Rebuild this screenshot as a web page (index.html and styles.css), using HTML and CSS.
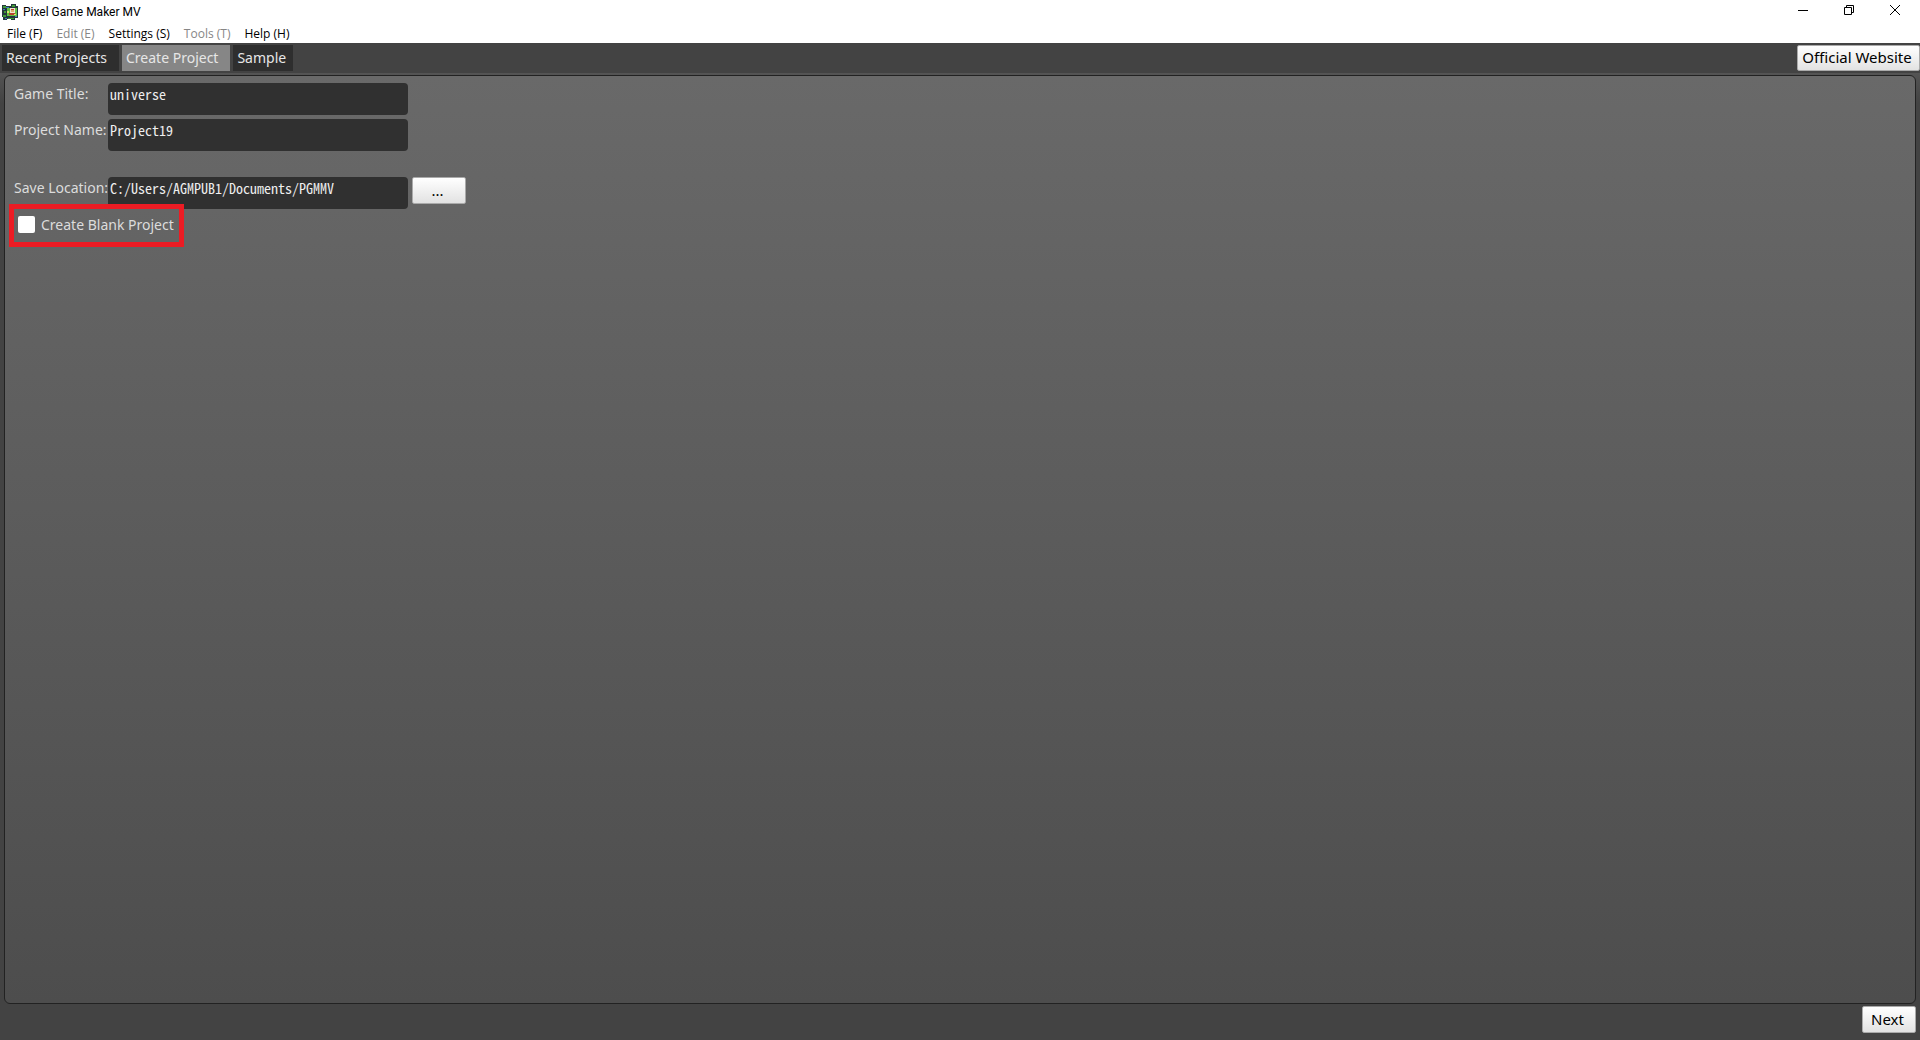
FILE: index.html
```html
<!DOCTYPE html>
<html lang="en">
<head>
    <meta charset="UTF-8">
    <meta name="viewport" content="width=device-width, initial-scale=1.0">
    <title>Pixel Game Maker MV</title>
    <link rel="stylesheet" href="styles.css">
</head>
<body>
    <!-- Title bar -->
    <header class="title-bar">
        <svg class="app-icon" viewBox="0 0 16 16" shape-rendering="crispEdges">
            <path fill="#24383c" d="M0 1h4v1h5V0h5v2h2v12h-3v2H9v-1H5v1H1v-3H0z"/>
            <path fill="#3f9a35" d="M1 2h3v2H1zM10 1h3v2h-3zM2 7h2v2H2zM1 11h3v2H1zM6 14h6v1H6z"/>
            <path fill="#3c7fc0" d="M4 3h3v1H4zM13 12h2v1h-2zM1 5h2v1H1zM3 14h2v1H3z"/>
            <path fill="#62c043" d="M5 4h10v8H5z"/>
            <path fill="#f0e4d0" d="M8 4h5v5H8z"/>
            <path fill="#b8452c" d="M9 5h3v1H9zM7 9h6v2H7z"/>
            <path fill="#e0b070" d="M9 6h3v2H9z"/>
            <path fill="#d9e66a" d="M5 7h2v2H5zM12 10h2v1h-2z"/>
        </svg>
        <span class="app-title">Pixel Game Maker MV</span>
        <div class="window-controls">
            <button type="button" aria-label="Minimize">
                <svg viewBox="0 0 10 10"><path d="M0 5.5h10"/></svg>
            </button>
            <button type="button" aria-label="Restore">
                <svg viewBox="0 0 10 10"><path d="M.5 2.5h7v7h-7zM2.5 2.5v-2h7v7h-2"/></svg>
            </button>
            <button type="button" aria-label="Close">
                <svg viewBox="0 0 10 10"><path d="M0 0l10 10M10 0L0 10"/></svg>
            </button>
        </div>
    </header>

    <!-- Menu bar -->
    <nav class="menu-bar">
        <button type="button">File (F)</button>
        <button type="button" disabled>Edit (E)</button>
        <button type="button">Settings (S)</button>
        <button type="button" disabled>Tools (T)</button>
        <button type="button">Help (H)</button>
    </nav>

    <!-- Tabs -->
    <div class="tab-bar">
        <button type="button" class="tab">Recent Projects</button>
        <button type="button" class="tab selected">Create Project</button>
        <button type="button" class="tab tab-short">Sample</button>
        <button type="button" class="push-button website-button">Official Website</button>
    </div>

    <!-- Create project form -->
    <form class="workspace">
        <div class="panel">
            <div class="field-row">
                <label for="game-title">Game Title:</label>
                <input type="text" id="game-title" value="universe">
            </div>
            <div class="field-row">
                <label for="project-name">Project Name:</label>
                <input type="text" id="project-name" value="Project19">
            </div>
            <div class="field-row location-row">
                <label for="save-location">Save Location:</label>
                <input type="text" id="save-location" value="C:/Users/AGMPUB1/Documents/PGMMV">
                <button type="button" class="push-button browse-button">...</button>
            </div>
            <label class="blank-project">
                <input type="checkbox" id="blank-project">
                Create Blank Project
            </label>
        </div>
        <div class="footer">
            <button type="button" class="push-button next-button">Next</button>
        </div>
    </form>
</body>
</html>
```

FILE: styles.css
```css
* {
    box-sizing: border-box;
}
body {
    margin: 0;
    min-height: 100vh;
    display: flex;
    flex-direction: column;
    background: #444;
    font-family: "Noto Sans", "Open Sans", sans-serif;
    font-size: 14px;
}
button {
    margin: 0;
    padding: 0;
    border: none;
    background: none;
    font: inherit;
    color: inherit;
}

/* Title bar */
.title-bar {
    display: flex;
    align-items: center;
    height: 23px;
    padding: 0 2px;
    background: white;
    font-family: Roboto, sans-serif;
    font-size: 12px;
    color: black;
}
.app-icon {
    width: 16px;
    height: 16px;
    margin-right: 5px;
}
.window-controls {
    display: flex;
    align-self: flex-start;
    margin-left: auto;
}
.window-controls button {
    display: flex;
    align-items: center;
    justify-content: center;
    width: 46px;
    height: 20px;
}
.window-controls svg {
    width: 10px;
    height: 10px;
    fill: none;
    stroke: black;
}

/* Menu bar */
.menu-bar {
    display: flex;
    align-items: center;
    gap: 14px;
    height: 20px;
    padding: 2px 0 0 7px;
    background: white;
    font-family: "Open Sans", sans-serif;
    font-size: 12px;
    line-height: 18px;
    color: black;
}
.menu-bar button:disabled {
    color: #868686;
}

/* Tabs */
.tab-bar {
    display: flex;
    gap: 3px;
    height: 30px;
    padding: 2px 0 2px 2px;
    background: #434343;
}
.tab {
    padding: 0 12px 2px 4px;
    background: #2e2e2e;
    color: #e6e6e6;
}
.tab-short {
    padding-right: 7px;
}
.tab.selected {
    background: #868686;
}

.push-button {
    padding: 0 3px 2px 0;
    background: linear-gradient(#fff, #e2e2e2);
    border: 1px solid #aaa;
    border-radius: 2px;
    color: black;
    font-size: 15px;
    line-height: 22px;
}
.website-button {
    width: 123px;
    margin-left: auto;
}

/* Form */
.workspace {
    flex: 1;
    display: flex;
    flex-direction: column;
    padding: 2px 4px 7px;
    background: linear-gradient(#545454, #434343 30px);
}
.panel {
    flex: 1;
    padding: 7px 9px;
    border: 1px solid #222;
    border-radius: 6px;
    background: linear-gradient(#696969, #4d4d4d);
    color: #dcdcdc;
}
.field-row {
    display: flex;
    align-items: flex-start;
    margin-bottom: 4px;
}
.field-row label {
    width: 94px;
    line-height: 22px;
    white-space: nowrap;
}
.field-row input {
    width: 300px;
    height: 32px;
    padding: 0 2px 10px;
    border: none;
    border-radius: 4px;
    background: #303030;
    color: #eee;
    font-family: "Noto Sans CJK JP", monospace;
    font-size: 14px;
    font-feature-settings: "hwid";
}
.location-row {
    margin-top: 26px;
    margin-bottom: 0;
}
.browse-button {
    width: 54px;
    height: 27px;
    margin-left: 4px;
}
.blank-project {
    display: inline-flex;
    align-items: center;
    gap: 6px;
    height: 33px;
    padding: 0 5px 2px 4px;
    outline: 5px solid #ec1c24;
}
.blank-project input {
    appearance: none;
    width: 17px;
    height: 17px;
    margin: 0;
    border-radius: 2px;
    background: white;
}

.footer {
    display: flex;
    justify-content: flex-end;
    padding-top: 2px;
}
.next-button {
    width: 54px;
    height: 27px;
}
```
